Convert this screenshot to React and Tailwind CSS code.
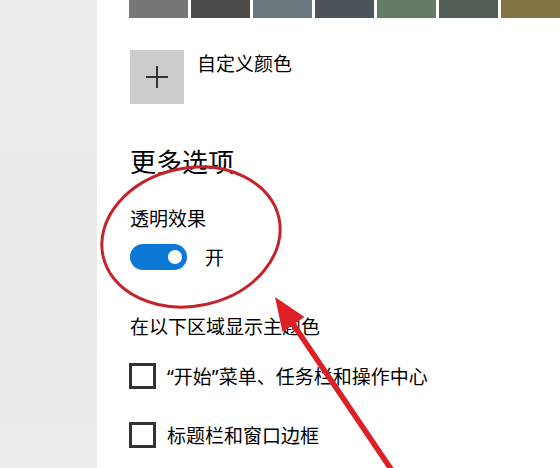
import React from "react";

const swatches = ["#767676", "#4c4a48", "#69797e", "#4a5459", "#647c64", "#525e54", "#847545"];

function Checkbox({ children }) {
  return (
    <div className="flex items-center gap-[11px] -ml-px h-[26px]">
      <div className="w-[27px] h-[26px] border-[3px] border-[#333333] bg-white" />
      <div className="text-[19px] leading-[26px] text-black">{children}</div>
    </div>
  );
}

export default function App() {
  return (
    <div
      className="relative w-[560px] h-[468px] overflow-hidden flex bg-white"
      style={{ fontFamily: '"Noto Sans CJK SC", "Noto Sans", sans-serif' }}
    >
      <div className="w-[97px] h-full bg-gradient-to-b from-[#efecec] via-[#eaeaeb] to-[#ebebeb]" />
      <div className="flex-1 flex flex-col pl-[33px]">
        <div className="flex gap-[3px] h-[18px] -ml-px">
          {swatches.map((c) => (
            <div key={c} className="w-[59px] h-full shrink-0" style={{ backgroundColor: c }} />
          ))}
        </div>

        <div className="flex items-start mt-[32px]">
          <div className="w-[54px] h-[54px] bg-[#cccccc] flex items-center justify-center">
            <svg width="24" height="24" viewBox="0 0 24 24">
              <path d="M12 1v22M1 12h22" stroke="#333333" strokeWidth="2" fill="none" />
            </svg>
          </div>
          <div className="ml-[13px] text-[19px] leading-[26px] text-black">自定义颜色</div>
        </div>

        <div className="mt-[40px] text-[26px] leading-[34px] text-black">更多选项</div>

        <div className="mt-[27px] text-[19px] leading-[26px] text-black">透明效果</div>

        <div className="mt-[13px] flex items-center h-[26px]">
          <div className="w-[57px] h-[26px] rounded-full bg-[#0a78d4] flex items-center justify-end pr-[5px]">
            <div className="w-[14px] h-[14px] rounded-full bg-white" />
          </div>
          <div className="ml-[18px] text-[19px] leading-[26px] text-black">开</div>
        </div>

        <div className="mt-[43px] text-[19px] leading-[26px] text-black">在以下区域显示主题色</div>

        <div className="mt-[24px]">
          <Checkbox>
            <span style={{ fontFamily: '"Noto Sans", sans-serif' }}>“</span>开始
            <span style={{ fontFamily: '"Noto Sans", sans-serif' }}>”</span>菜单、任务栏和操作中心
          </Checkbox>
        </div>
        <div className="mt-[33px]">
          <Checkbox>标题栏和窗口边框</Checkbox>
        </div>
      </div>

      <svg
        className="absolute inset-0 pointer-events-none"
        width="560"
        height="468"
        viewBox="0 0 560 468"
      >
        <ellipse
          cx="191"
          cy="237"
          rx="90"
          ry="69"
          transform="rotate(-12 191 237)"
          fill="none"
          stroke="#c4232b"
          strokeWidth="3"
        />
        <line x1="293" y1="324" x2="393" y2="472" stroke="#dd1f26" strokeWidth="5.5" />
        <polygon points="275,297 304.5,317 282.5,332" fill="#dd1f26" />
      </svg>
    </div>
  );
}
